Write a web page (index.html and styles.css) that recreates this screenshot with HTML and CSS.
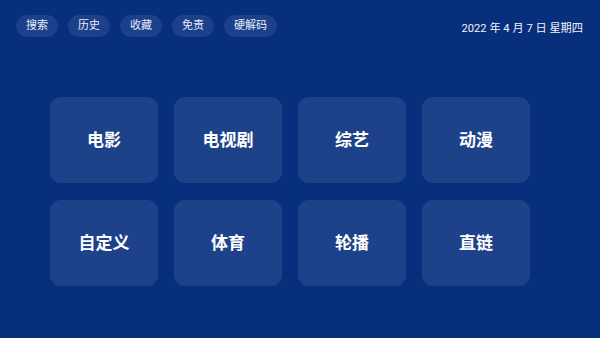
FILE: index.html
```html
<!DOCTYPE html>
<html lang="zh">
<head>
<meta charset="utf-8">
<link rel="stylesheet" href="styles.css">
</head>
<body>
<div class="screen">
  <header class="topbar">
    <nav class="pills">
      <span class="pill">搜索</span>
      <span class="pill">历史</span>
      <span class="pill">收藏</span>
      <span class="pill">免责</span>
      <span class="pill">硬解码</span>
    </nav>
    <div class="date">2022 年 4 月 7 日 星期四</div>
  </header>
  <main class="grid">
    <div class="card">电影</div>
    <div class="card">电视剧</div>
    <div class="card">综艺</div>
    <div class="card">动漫</div>
    <div class="card">自定义</div>
    <div class="card">体育</div>
    <div class="card">轮播</div>
    <div class="card">直链</div>
  </main>
</div>
</body>
</html>
```
FILE: styles.css
```css
html, body {
  margin: 0;
  padding: 0;
}
body {
  background: #072f7c;
  font-family: Roboto, "Noto Sans CJK SC", sans-serif;
  color: #ffffff;
}
.screen {
  width: 600px;
  height: 338px;
  box-sizing: border-box;
  padding: 15px 17px 0 16px;
}
.topbar {
  display: flex;
  justify-content: space-between;
  align-items: center;
  height: 22px;
}
.pills {
  display: flex;
  gap: 10px;
}
.pill {
  height: 22px;
  line-height: 22px;
  padding: 0 10px;
  border-radius: 11px;
  background: #1c4089;
  font-size: 11px;
  color: #e8eef8;
}
.date {
  font-size: 11.2px;
  font-weight: 400;
  color: #f2f5fb;
  padding-top: 1px;
}
.grid {
  display: grid;
  grid-template-columns: repeat(4, 108px);
  grid-auto-rows: 86px;
  column-gap: 16px;
  row-gap: 17px;
  margin: 60px 0 0 34px;
}
.card {
  background: #1e428a;
  border-radius: 11px;
  display: flex;
  align-items: center;
  justify-content: center;
  padding-bottom: 4px;
  box-sizing: border-box;
  font-size: 17px;
  font-weight: 700;
  color: #ffffff;
}
```
